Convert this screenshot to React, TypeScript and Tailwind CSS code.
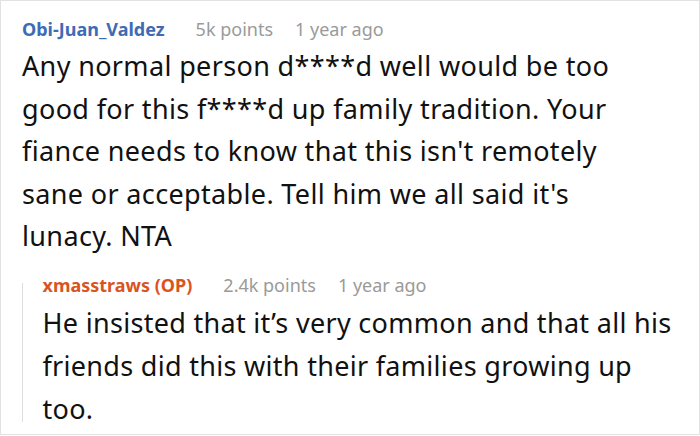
export default function App() {
  const font = { fontFamily: '"Noto Sans", "Open Sans", sans-serif' };
  return (
    <div className="w-[700px] h-[435px] border border-[#e2e2e2] bg-white overflow-hidden" style={font}>
      <div className="pl-[21px] pr-[14px] pt-[13px]">
        <div className="flex items-center gap-[31px] text-[18px] leading-[30px]">
          <span className="font-bold text-[#3f6bb5]">Obi-Juan_Valdez</span>
          <div className="flex gap-[22px] text-[#9a9a9a]">
            <span>5k points</span>
            <span>1 year ago</span>
          </div>
        </div>
        <p className="text-[27px] leading-[42.5px] tracking-[0.35px] text-[#111] mt-[1px] mr-[45px]">
          Any normal person d****d well would be too good for this f****d up family tradition. Your fiance needs to know that this isn't remotely sane or acceptable. Tell him we all said it's lunacy. NTA
        </p>
        <div className="flex mt-[12px]">
          <div className="w-px bg-[#dedede] mt-[13px] mb-[8px]" />
          <div className="pl-[20px]">
            <div className="flex items-center gap-[31px] text-[18px] leading-[30px]">
              <span className="font-bold text-[#d9541e]">xmasstraws (OP)</span>
              <div className="flex gap-[22px] text-[#9a9a9a]">
                <span>2.4k points</span>
                <span>1 year ago</span>
              </div>
            </div>
            <p className="text-[27px] leading-[43px] tracking-[0.3px] text-[#111] mt-[1px]">
              He insisted that it’s very common and that all his friends did this with their families growing up too.
            </p>
          </div>
        </div>
      </div>
    </div>
  );
}
